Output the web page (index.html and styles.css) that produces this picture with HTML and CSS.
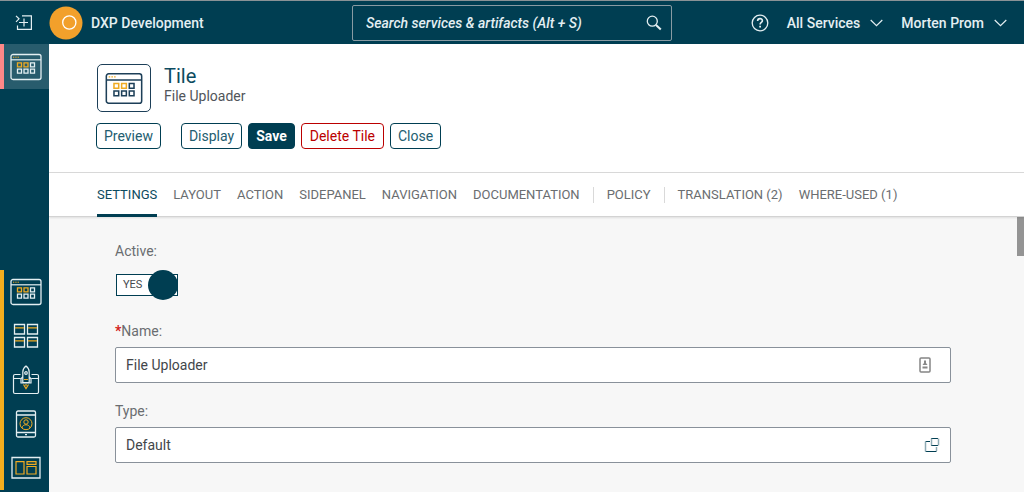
FILE: index.html
```html
<!DOCTYPE html>
<html lang="en">
<head>
<meta charset="utf-8">
<title>DXP Development</title>
<link rel="stylesheet" href="styles.css">
</head>
<body>
<svg class="defs" width="0" height="0" aria-hidden="true">
  <symbol id="tile" viewBox="0 0 32 28">
    <g fill="none" stroke="currentColor">
      <rect x="1" y="1.5" width="30" height="25" rx="2" stroke-width="1.3"/>
      <path d="M1 6.8h30" stroke-width="1.2"/>
      <path d="M20.5 9.8h4v4h-4zM7.5 16.2h4v4h-4zM14 16.2h4v4h-4zM20.5 16.2h4v4h-4z" stroke-width="1.3"/>
      <path class="accent" d="M7.5 9.8h4v4h-4zM14 9.8h4v4h-4z" stroke-width="1.3"/>
      <path class="accent" d="M3 4.2h6" stroke-dasharray="1.3 1" stroke-width="1"/>
    </g>
  </symbol>
</svg>
<div class="app">
  <header class="topbar">
    <button class="icon-btn expand" aria-label="Expand menu">
      <svg width="18" height="16" viewBox="0 0 18 16" fill="none" stroke="currentColor" stroke-width="1.2"><path d="M7 .8h9.4v13.6H2.5v-4M1 .8l3 3-3 3M4 7.5h9M9 3.5v8"/></svg>
    </button>
    <svg class="logo" width="34" height="34" viewBox="0 0 34 34"><circle cx="17" cy="17" r="16.5" fill="#f2a02b"/><circle cx="20.3" cy="16.5" r="6.6" fill="none" stroke="#fff" stroke-width="1.3"/></svg>
    <span class="brand">DXP Development</span>
    <div class="search">
      <input type="search" aria-label="Search" placeholder="Search services &amp; artifacts (Alt + S)">
      <button class="icon-btn" aria-label="Search">
        <svg width="16" height="16" viewBox="0 0 16 16" fill="none" stroke="currentColor"><circle cx="6.3" cy="6.2" r="5" stroke-width="1.3"/><path d="M10 10l4.8 4.5" stroke-width="2"/></svg>
      </button>
    </div>
    <div class="user">
      <button class="icon-btn" aria-label="Help">
        <svg width="18" height="18" viewBox="0 0 18 18" fill="none" stroke="currentColor"><circle cx="9" cy="9" r="7.8" stroke-width="1.3"/><path d="M6.6 7.1c0-3.3 4.8-3.2 4.8-.4 0 1.8-2.3 1.8-2.3 3.8" stroke-width="1.6"/><path d="M8.2 12.7h1.8" stroke-width="1.8"/></svg>
      </button>
      <button class="menu services">All Services <svg width="13" height="8" viewBox="0 0 13 8" fill="none" stroke="currentColor" stroke-width="1.2"><path d="M.7 1l5.8 5.6L12.3 1"/></svg></button>
      <button class="menu">Morten Prom <svg width="13" height="8" viewBox="0 0 13 8" fill="none" stroke="currentColor" stroke-width="1.2"><path d="M.7 1l5.8 5.6L12.3 1"/></svg></button>
    </div>
  </header>
  <div class="body">
    <nav class="side" aria-label="Services">
      <a class="side-item current" href="#" aria-label="Tile"><svg width="32" height="28"><use href="#tile"/></svg></a>
      <div class="group">
        <a class="side-item" href="#" aria-label="Tiles"><svg width="32" height="28"><use href="#tile"/></svg></a>
        <a class="side-item" href="#" aria-label="Tile groups"><svg width="26" height="26" viewBox="0 0 26 26" fill="none" stroke="currentColor" stroke-width="1.3"><path d="M1.5 1.5h10v9.5h-10zM14.5 1.5h10v9.5h-10zM1.5 14.5h10v9.5h-10zM14.5 14.5h10v9.5h-10z"/><path class="accent" d="M2 4.8h9M15 4.8h9M2 17.8h9M15 17.8h9"/></svg></a>
        <a class="side-item" href="#" aria-label="Launch"><svg width="28" height="30" viewBox="0 0 28 30" fill="none" stroke="currentColor" stroke-width="1.2"><path d="M8.5 9.5H3a1.5 1.5 0 0 0-1.5 1.5v16A1.5 1.5 0 0 0 3 28.5h22a1.5 1.5 0 0 0 1.5-1.5V11A1.5 1.5 0 0 0 25 9.5h-5.5M2 13.5h6.5M19.5 13.5h7M10.8 17.500V7c0-2.800 1.600-4.800 3.200-6 1.600 1.200 3.200 3.200 3.200 6v10.500zM10.800 11.500L9 14v4h10v-4l-1.800-2.500"/><circle cx="14" cy="8" r="1.300"/><path class="accent" d="M12 14.500h4M11.500 19.500l2.500 4 2.500-4M14 19v2"/></svg></a>
        <a class="side-item" href="#" aria-label="Personas"><svg width="22" height="28" viewBox="0 0 22 28" fill="none" stroke="currentColor" stroke-width="1.3"><rect x="1.500" y="1" width="19" height="26" rx="1.500"/><path d="M2 5h18M2 22.500h18M10 24.700h2"/><g class="accent" stroke-width="1"><circle cx="11" cy="13.700" r="6"/><circle cx="11" cy="12" r="2.200"/><path d="M7 18c.4-4.300 7.600-4.300 8 0"/></g></svg></a>
        <a class="side-item" href="#" aria-label="Layouts"><svg width="30" height="24" viewBox="0 0 30 24" fill="none" stroke="currentColor" stroke-width="1.300"><path d="M1 1.500h28v20.500H1z"/><path class="accent" d="M5 5.700h8v12.300H5zM16 5.700h9v2.600h-9zM16 10.500h9V18h-9z" stroke-width="1.200"/></svg></a>
      </div>
    </nav>
    <main class="main">
      <section class="head">
        <div class="title-row">
          <div class="tile-icon"><svg width="38" height="33"><use href="#tile"/></svg></div>
          <div><h1>Tile</h1><p>File Uploader</p></div>
        </div>
        <div class="actions">
          <button class="btn preview">Preview</button>
          <button class="btn">Display</button>
          <button class="btn primary">Save</button>
          <button class="btn danger">Delete Tile</button>
          <button class="btn">Close</button>
        </div>
      </section>
      <nav class="tabs" aria-label="Tile sections">
        <a class="active" href="#">SETTINGS</a>
        <a href="#">LAYOUT</a>
        <a href="#">ACTION</a>
        <a href="#">SIDEPANEL</a>
        <a href="#">NAVIGATION</a>
        <a href="#">DOCUMENTATION</a>
        <i class="sep"></i>
        <a href="#">POLICY</a>
        <i class="sep"></i>
        <a href="#">TRANSLATION (2)</a>
        <a href="#">WHERE-USED (1)</a>
      </nav>
      <div class="scroll">
        <form class="form">
          <label for="active">Active:</label>
          <label class="switch"><input id="active" type="checkbox" role="switch" checked><span>YES</span></label>
          <label for="name"><b>*</b>Name:</label>
          <div class="field">
            <input id="name" type="text" value="File Uploader">
            <svg class="card" width="12" height="16" viewBox="0 0 12 16"><rect x="1" y="1" width="10" height="14" rx="1" fill="#fff" stroke="#858585" stroke-width="1.500"/><path d="M5 3.500h2V6l1.500 2h-5L5 6zM3.500 9.500h5v2h-5z" fill="#888"/></svg>
          </div>
          <label for="type">Type:</label>
          <div class="field">
            <input id="type" type="text" value="Default">
            <button type="button" class="icon-btn" aria-label="Choose type"><svg width="16" height="16" viewBox="0 0 16 16" fill="none" stroke="#003e52"><path d="M7 1.500h7M7 8.500h7M1.500 4.500H6M1.500 14.500h11"/><path d="M7.500 1.500v7M14.500 1.500v7M1.500 4.500v10M12.500 10v4" stroke="#8fabb5" stroke-width="1.500"/></svg></button>
          </div>
        </form>
        <div class="thumb"></div>
      </div>
    </main>
  </div>
</div>
</body>
</html>
```
FILE: styles.css
```css
* { box-sizing: border-box; }
body { margin: 0; font: 14px/20px Roboto, "Liberation Sans", sans-serif; color: #42464a; }
.defs { position: absolute; }
button, input { font: inherit; color: inherit; }
svg { display: block; }
h1, p { margin: 0; }
.accent { stroke: #f0ab22; }
.app { display: flex; flex-direction: column; height: 100vh; overflow: hidden; }
.icon-btn { border: 0; padding: 0; background: none; color: inherit; }

.topbar { display: flex; flex: none; align-items: center; height: 44px; padding: 1px 17px 0 15px; border-top: 1px solid #8a9296; background: #003e52; color: #e4eff2; }
.expand { margin-right: 16px; }
.brand { width: 269px; padding-left: 8px; font-weight: 500; }
.search { display: flex; align-items: center; width: 320px; height: 36px; padding: 0 9px 0 13px; border: 1px solid #899ba3; border-radius: 2px; }
.search input { flex: 1; min-width: 0; padding: 0; border: 0; outline: 0; background: none; font-style: italic; font-weight: 500; }
.search input::placeholder { color: #e4eff2; opacity: 1; }
.user { display: flex; align-items: center; margin-left: auto; }
.menu { display: flex; align-items: center; gap: 10px; padding: 0; border: 0; background: none; font-weight: 500; }
.services { margin: 0 18px; }

.body { display: flex; flex: 1; min-height: 0; }
.side { display: flex; flex: none; flex-direction: column; justify-content: space-between; width: 49px; padding-bottom: 2px; background: #003e52; }
.side-item { display: flex; align-items: center; justify-content: center; height: 44px; padding-right: 1px; color: #e4eff2; }
.side-item.current { height: 45px; border-left: 4px solid #ff8888; background: #285c6d; }
.group { border-left: 4px solid #f5ae1e; }

.main { display: flex; flex: 1; flex-direction: column; min-width: 0; }
.head { flex: none; padding: 20px 48px 23px; border-bottom: 1px solid #d9d9d9; }
.title-row { display: flex; gap: 13px; }
.tile-icon { display: flex; align-items: center; justify-content: center; width: 54px; height: 48px; border: 1px solid #1d3f58; border-radius: 5px; color: #1d3f58; }
h1 { color: #0c4b60; font-size: 20px; font-weight: 400; line-height: 24px; }
.title-row p { line-height: 16px; color: #51555a; }
.actions { display: flex; gap: 6px; margin: 11px 0 0 -1px; }
.btn { height: 26px; padding: 0 7px; border: 1px solid #003e52; border-radius: 4px; background: #fff; color: #235d70; }
.preview { margin-right: 14px; }
.primary { background: #003e52; color: #fff; font-weight: 700; }
.danger { padding: 0 8px; border-color: #bb0000; color: #bb0000; }

.tabs { display: flex; flex: none; align-items: center; gap: 16px; height: 44px; padding: 0 48px; border-bottom: 1px solid #d3d3d3; box-shadow: 0 1px 2px #0000001a; z-index: 1; font-size: 13px; }
.tabs a { display: flex; align-items: center; height: 44px; border-bottom: 3px solid transparent; border-top: 3px solid transparent; color: #6a6d70; text-decoration: none; white-space: nowrap; }
.tabs .active { border-bottom-color: #003e52; color: #0c4b60; }
.sep { width: 1px; height: 16px; margin: 0 -3px; background: #d9d9d9; }

.scroll { display: flex; flex: 1; min-height: 0; background: #f7f7f7; }
.form { flex: 1; padding: 24px 66px; }
.form > label { display: block; height: 20px; margin-bottom: 6px; color: #6a6d70; }
.form b { color: #d32020; }
.form .switch { display: flex; position: relative; align-items: center; width: 62px; height: 22px; margin: 13px 1px 25px; border: 1px solid #003e52; background: #fff; font-size: 11px; color: #45494d; }
.switch span { padding-left: 6px; }
.switch input { position: absolute; right: -1px; width: 30px; height: 30px; margin: 0; border-radius: 50%; appearance: none; background: #003e52; }
.field { display: flex; align-items: center; height: 36px; margin-bottom: 18px; padding: 0 10px; border: 1px solid #89919a; border-radius: 2px; background: #fff; }
.field input { flex: 1; min-width: 0; padding: 0; border: 0; outline: 0; background: none; }
.card { margin-right: 9px; }
.thumb { width: 7px; height: 39px; background: #949494; }
```
